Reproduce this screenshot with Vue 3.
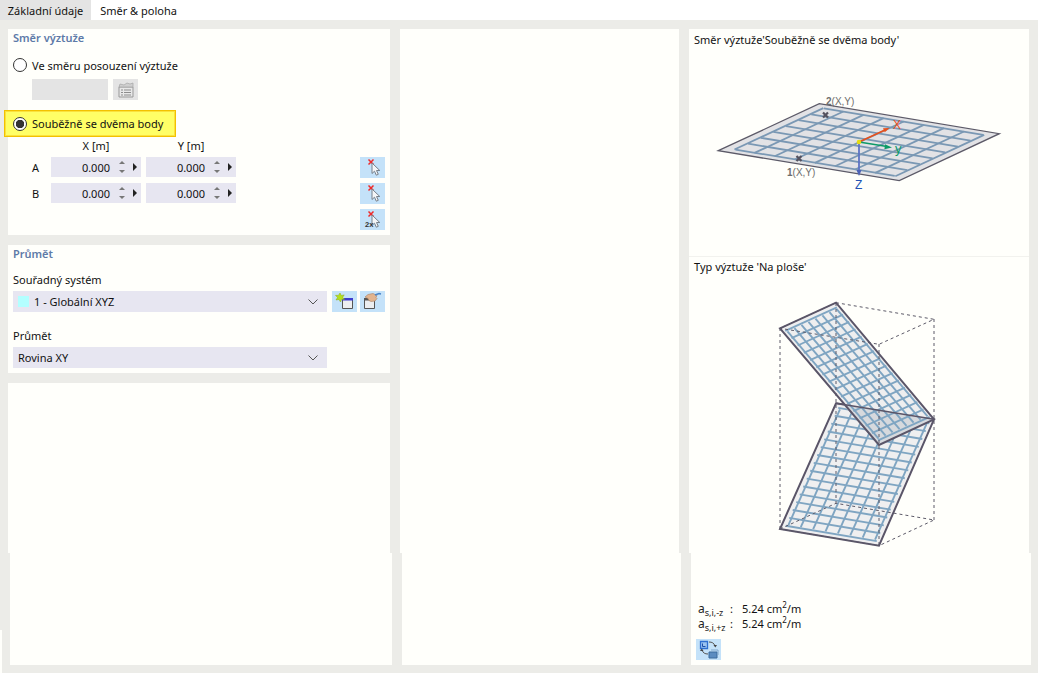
<script setup>
// rebar lines on a plate given by three corners: a, b (along u), d (along v)
function rebars(a, b, d, nu, nv, inset = 0.04) {
  const at = (u, v) => [a[0] + u * (b[0] - a[0]) + v * (d[0] - a[0]), a[1] + u * (b[1] - a[1]) + v * (d[1] - a[1])]
  const lines = []
  for (let i = 0; i < nu; i++) {
    const u = (i + 0.5) / nu
    const p = at(u, inset)
    const q = at(u, 1 - inset)
    lines.push({ x1: p[0], y1: p[1], x2: q[0], y2: q[1] })
  }
  for (let i = 0; i < nv; i++) {
    const v = (i + 0.5) / nv
    const p = at(inset, v)
    const q = at(1 - inset, v)
    lines.push({ x1: p[0], y1: p[1], x2: q[0], y2: q[1] })
  }
  return lines
}

const flatLines = rebars([29.3, 121.7], [130.3, 74.7], [210.3, 151.7], 8, 9, 0.06)
const topLines = rebars([91, 58.3], [147, 32.7], [190, 175], 8, 16)
const lowLines = rebars([91, 259], [147, 133.3], [190, 275.7], 16, 8)

const coords = [
  { name: 'A', x: '0.000', y: '0.000' },
  { name: 'B', x: '0.000', y: '0.000' },
]
</script>

<template>
  <div class="page">
    <div class="tabs">
      <div class="tab">Základní údaje</div>
      <div class="tab active">Směr &amp; poloha</div>
    </div>

    <div class="top-row">
      <div class="col col-left">
        <section class="panel panel-dir">
          <h3 class="panel-title">Směr výztuže</h3>
          <label class="radio-row">
            <span class="radio"></span>
            <span>Ve směru posouzení výztuže</span>
          </label>
          <div class="disabled-row">
            <div class="disabled-input"></div>
            <button type="button" class="icon-btn is-disabled">
              <svg width="20" height="18" viewBox="0 0 20 18">
                <path d="M3 6h14v10H3z" fill="#e8e8e8" stroke="#999" />
                <path d="M5 9h2M8 9h7M5 11.500h2M8 11.500h7M5 14h2M8 14h7" stroke="#8d8d8d" />
                <path d="M3 6l1-3 4 1 3-2 3 1 3-1v4z" fill="#cfcfcf" stroke="#a5a5a5" stroke-width=".7" />
              </svg>
            </button>
          </div>
          <label class="radio-row highlight">
            <span class="radio checked"></span>
            <span>Souběžně se dvěma body</span>
          </label>
          <div class="coord-grid">
            <span></span>
            <span class="coord-head">X [m]</span>
            <span class="coord-head">Y [m]</span>
            <span></span>
            <span></span>
            <template v-for="row in coords" :key="row.name">
              <span class="coord-name">{{ row.name }}</span>
              <div class="spin">
                <span class="spin-val">{{ row.x }}</span>
                <span class="spin-arrows"></span>
                <span class="spin-play"></span>
              </div>
              <div class="spin">
                <span class="spin-val">{{ row.y }}</span>
                <span class="spin-arrows"></span>
                <span class="spin-play"></span>
              </div>
              <span></span>
              <button type="button" class="icon-btn">
                <svg width="25" height="21" viewBox="0 0 25 21">
                  <path d="M8.500 2.500l5 5M13.500 2.500l-5 5" stroke="#ee2a2a" stroke-width="1.500" />
                  <path d="M12 6v10.500l2.500-2.300 1.800 4 2-.9-1.800-3.800h3.300z" fill="#f4f6f8" stroke="#77808a" />
                </svg>
              </button>
            </template>
            <span class="grid-fill"></span>
            <button type="button" class="icon-btn">
              <svg width="25" height="21" viewBox="0 0 25 21">
                <path d="M8.500 2.500l5 5M13.500 2.500l-5 5" stroke="#ee2a2a" stroke-width="1.500" />
                <path d="M12 6v10.500l2.500-2.300 1.800 4 2-.9-1.800-3.800h3.300z" fill="#f4f6f8" stroke="#77808a" />
                <text x="5" y="18" class="two-x">2x</text>
              </svg>
            </button>
          </div>
        </section>

        <section class="panel panel-avg">
          <h3 class="panel-title">Průmět</h3>
          <div class="field-label first">Souřadný systém</div>
          <div class="select-row">
            <div class="select">
              <span class="swatch"></span>
              <span>1 - Globální XYZ</span>
              <svg class="chevron" width="10" height="6" viewBox="0 0 10 6"><path d="M.5 .5L5 5 9.500 .5" fill="none" stroke="#555" /></svg>
            </div>
            <button type="button" class="icon-btn">
              <svg width="25" height="21" viewBox="0 0 25 21">
                <path d="M10.500 7.500h10v10h-10z" fill="#eceef0" stroke="#555" />
                <path d="M10 7h11v2.500H10z" fill="#3c3cd0" />
                <path d="M8 2l1.300 2.500 2.900-.6-1.600 2.400 2 2-2.900-.1L8.500 11 7 8.500 4 9l1.500-2.500L3.500 4.300l2.900.1z" fill="#b4e11c" stroke="#8aa818" stroke-width=".5" />
              </svg>
            </button>
            <button type="button" class="icon-btn">
              <svg width="25" height="21" viewBox="0 0 25 21">
                <path d="M4.500 7.500h10v10h-10z" fill="#eceef0" stroke="#555" />
                <path d="M4 7h11v2.500H4z" fill="#555" />
                <path d="M5 6l3-2.500 5-1 2 1 2 1-1 2 1 1-2 2.500-4 .5-2-1-1-2z" fill="#e2b48e" stroke="#a77f62" stroke-width=".6" />
                <path d="M15 4l4-1.500 2 .5" fill="none" stroke="#4a86c8" stroke-width="1.400" />
              </svg>
            </button>
          </div>
          <div class="field-label">Průmět</div>
          <div class="select-row">
            <div class="select">
              <span>Rovina XY</span>
              <svg class="chevron" width="10" height="6" viewBox="0 0 10 6"><path d="M.5 .5L5 5 9.500 .5" fill="none" stroke="#555" /></svg>
            </div>
          </div>
        </section>

        <section class="panel panel-empty"></section>
      </div>

      <div class="col col-mid panel"></div>

      <div class="col col-right panel">
        <div class="preview preview-dir">
          <div class="preview-title">Směr výztuže'Souběžně se dvěma body'</div>
          <svg class="preview-svg" width="340" height="209" viewBox="0 18 340 209">
            <path d="M29.300 121.700L130.300 74.700 310.300 104.700 210.300 151.700z" fill="#e2e2e5" stroke="#5c5a68" stroke-width="1.300" />
            <line v-for="(l, i) in flatLines" :key="i" v-bind="l" stroke="#7a98b4" stroke-width="1.800" />
            <path d="M134 83.500l5 5M139 83.500l-5 5M107.500 127l5 5M112.500 127l-5 5" stroke="#55525f" stroke-width="2.200" />
            <text x="137" y="76" class="pt-label"><tspan font-weight="700">2</tspan>(X,Y)</text>
            <text x="98" y="147" class="pt-label"><tspan font-weight="700">1</tspan>(X,Y)</text>
            <path d="M170 113L196 101" stroke="#e8501c" stroke-width="1.500" />
            <path d="M200.500 99l-6.500 .2 1.800 4z" fill="#e8501c" />
            <path d="M170 113L198 117.500" stroke="#0c9a68" stroke-width="1.500" />
            <path d="M203 118.500l-7-3.200-.6 5z" fill="#0c9a68" />
            <path d="M170 113V142" stroke="#5e74c4" stroke-width="1.800" />
            <path d="M170 147l-2.500-6h5z" fill="#4c62b8" />
            <circle cx="170" cy="113" r="2.300" fill="#e5dc10" />
            <text x="204" y="100" class="axis ax-x">X</text>
            <text x="206" y="124" class="axis ax-y">y</text>
            <text x="166" y="160" class="axis ax-z">Z</text>
          </svg>
        </div>
        <div class="preview preview-type">
          <div class="preview-title">Typ výztuže 'Na ploše'</div>
          <svg class="preview-svg" width="340" height="275" viewBox="0 8 340 275">
            <path d="M147 133.300L245 149.300 190 275.700 91 259z" fill="#efeff0" stroke="#5a5568" stroke-width="2" />
            <line v-for="(l, i) in lowLines" :key="'b' + i" v-bind="l" stroke="#7fa5c2" stroke-width="1.900" />
            <path d="M91 58.300L147 32.700 245 149.300 190 175z" fill="#eeeeef" />
            <path d="M154 134.400L245 149.300 190 175z" fill="#d6d9dd" />
            <line v-for="(l, i) in topLines" :key="'t' + i" v-bind="l" stroke="#7fa5c2" stroke-width="1.900" />
            <g fill="none" stroke="#5c5a68" stroke-dasharray="3 3">
              <path d="M147 32.700L245 49.300 190 74.300 91 58.300z" />
              <path d="M91 259L147 233.300 245 250 190 275.700z" />
              <path d="M91 58v201M147 33v200M245 49v201M190 74v201" />
            </g>
            <path d="M147 133.300L245 149.300" stroke="#5a5568" stroke-width="1.600" />
            <path d="M91 58.300L147 32.700 245 149.300 190 175z" fill="none" stroke="#5a5568" stroke-width="2" />
          </svg>
        </div>
      </div>
    </div>

    <div class="bottom-row">
      <div class="col col-left panel"></div>
      <div class="col col-mid panel"></div>
      <div class="col col-right panel legend">
        <div class="legend-row">
          <span class="legend-key">a<sub>s,i,-z</sub></span>
          <span class="legend-colon">:</span>
          <span>5.24 cm<sup>2</sup>/m</span>
        </div>
        <div class="legend-row">
          <span class="legend-key">a<sub>s,i,+z</sub></span>
          <span class="legend-colon">:</span>
          <span>5.24 cm<sup>2</sup>/m</span>
        </div>
        <button type="button" class="icon-btn legend-btn">
          <svg width="25" height="21" viewBox="0 0 25 21">
            <path d="M4.500 2.500h7v7h-7z" fill="#9cc4f0" stroke="#2f6fd0" stroke-width="1.300" />
            <path d="M6.500 4.500v3h3" fill="none" stroke="#1c4fa8" />
            <path d="M13 3c3 0 5 1 6 4M12 15c-3 0-5-1-6-4" fill="none" stroke="#555" />
            <path d="M17.500 6h3.500l-1.700 2.500zM4 12h3.500l-1.700-2.500z" fill="#444" />
            <path d="M13 13h8v6h-8z" fill="#5b8cc0" stroke="#3b6a9c" />
            <path d="M15 11h7v5" fill="none" stroke="#7ea6cc" />
          </svg>
        </button>
      </div>
    </div>

    <div class="corner"></div>
  </div>
</template>

<style scoped>
.page {
  position: relative;
  width: 1038px;
  height: 673px;
  overflow: hidden;
  background: #ecece8;
  font-family: "Noto Sans", "Liberation Sans", sans-serif;
  font-size: 11px;
  color: #111;
}

.tabs {
  display: flex;
  height: 20px;
  background: #fff;
}

.tab {
  width: 91px;
  line-height: 22px;
  text-align: center;
  background: #e4e4e4;
}

.tab.active {
  width: 95px;
  background: #fff;
}

.top-row,
.bottom-row {
  display: flex;
  gap: 10px;
}

.top-row {
  height: 524px;
  margin: 9px 0 0 8px;
}

.bottom-row {
  height: 112px;
  margin-left: 10px;
}

.col-left {
  display: flex;
  flex-direction: column;
  gap: 10px;
  width: 382px;
}

.col-mid {
  width: 279px;
}

.col-right {
  width: 340px;
}

.panel {
  background: #fffffb;
}

.panel-title {
  margin: 0;
  font-size: 11px;
  font-weight: 600;
  line-height: 18px;
  color: #5d7aa8;
}

.panel-dir {
  height: 206px;
  padding: 0 5px;
  box-sizing: border-box;
}

.panel-avg {
  height: 128px;
  padding: 0 5px;
  box-sizing: border-box;
}

.panel-empty {
  flex: 1;
}

.radio-row {
  display: flex;
  align-items: center;
  gap: 5px;
  height: 20px;
  margin-top: 8px;
}

.radio {
  box-sizing: border-box;
  width: 14px;
  height: 14px;
  border: 1px solid #333;
  border-radius: 50%;
  background: #fff;
}

.radio.checked {
  background: radial-gradient(circle, #333 0 4px, #fff 4.500px);
}

.disabled-row {
  display: flex;
  gap: 5px;
  margin: 4px 0 0 19px;
}

.disabled-input {
  width: 76px;
  height: 21px;
  background: #e4e4e4;
}

.icon-btn {
  display: block;
  width: 25px;
  height: 21px;
  padding: 0;
  border: none;
  background: #c4e2f9;
}

.icon-btn.is-disabled {
  display: flex;
  align-items: center;
  justify-content: center;
  background: #e4e4e4;
}

.highlight {
  box-sizing: border-box;
  width: 172px;
  height: 27px;
  margin: 10px 0 0 -9px;
  padding-left: 8px;
  border: 1px solid #f2c200;
  box-shadow: inset 0 0 0 1px #fbe23c;
  background: #ffff66;
}

.coord-grid {
  display: grid;
  grid-template-columns: 14px 90px 90px 1fr 25px;
  grid-auto-rows: min-content;
  column-gap: 5px;
  row-gap: 5px;
  margin: 4px 0 0 19px;
}

.coord-head {
  height: 12px;
  line-height: 10px;
  text-align: center;
  margin-bottom: -1px;
}

.coord-name {
  line-height: 21px;
}

.spin {
  display: flex;
  align-items: center;
  height: 20px;
  background: #e7e6f1;
}

.spin-val {
  width: 59px;
  text-align: right;
}

.spin-arrows {
  position: relative;
  width: 7px;
  height: 14px;
  margin-left: 9px;
}

.spin-arrows::before,
.spin-arrows::after {
  content: "";
  position: absolute;
  left: 0;
  border-left: 3.500px solid transparent;
  border-right: 3.500px solid transparent;
}

.spin-arrows::before {
  top: 1px;
  border-bottom: 3.500px solid #777;
}

.spin-arrows::after {
  bottom: 1px;
  border-top: 3.500px solid #777;
}

.spin-play {
  width: 0;
  height: 0;
  margin-left: 7px;
  border-top: 4px solid transparent;
  border-bottom: 4px solid transparent;
  border-left: 4px solid #222;
}

.grid-fill {
  grid-column: 1 / 5;
}

.two-x {
  font-size: 7.500px;
  font-weight: 700;
  fill: #333;
}

.field-label {
  height: 15px;
  margin-top: 17px;
  line-height: 13px;
}

.field-label.first {
  margin-top: 10px;
}

.select-row {
  display: flex;
  gap: 3px;
  margin-top: 3px;
}

.select {
  display: flex;
  align-items: center;
  gap: 5px;
  box-sizing: border-box;
  width: 314px;
  height: 21px;
  margin-right: 2px;
  padding: 0 9px 0 5px;
  background: #e7e6f1;
}

.swatch {
  width: 11px;
  height: 11px;
  background: #b3ffff;
}

.chevron {
  margin-left: auto;
}

.preview {
  display: flex;
  flex-direction: column;
}

.preview-dir {
  height: 227px;
  border-bottom: 1px solid #f2f2ee;
}

.preview-title {
  height: 18px;
  padding-left: 5px;
  line-height: 21px;
}

.preview-svg {
  display: block;
}

.preview-type .preview-title {
  height: 21px;
  line-height: 19px;
}

.pt-label {
  font-family: "Liberation Sans", sans-serif;
  font-size: 10px;
  fill: #6d6d6d;
}

.axis {
  font-family: "Liberation Sans", sans-serif;
  font-size: 12px;
}

.ax-x {
  fill: #e8501c;
}

.ax-y {
  fill: #0c9a68;
  font-size: 13px;
}

.ax-z {
  fill: #2252b4;
}

.legend {
  padding: 48px 0 0 7px;
  box-sizing: border-box;
}

.legend-row {
  display: flex;
  align-items: center;
  height: 15px;
}

.legend-key {
  width: 32px;
  font-size: 12px;
  color: #222;
}

.legend-key sub {
  font-size: 9px;
  line-height: 0;
}

.legend-colon {
  width: 12px;
}

.legend-row sup {
  font-size: 8px;
  line-height: 0;
}

.legend-btn {
  margin: 8px 0 0 -2px;
}

.corner {
  position: absolute;
  left: 0;
  top: 630px;
  width: 2px;
  height: 43px;
  background: #fffffb;
}
</style>
